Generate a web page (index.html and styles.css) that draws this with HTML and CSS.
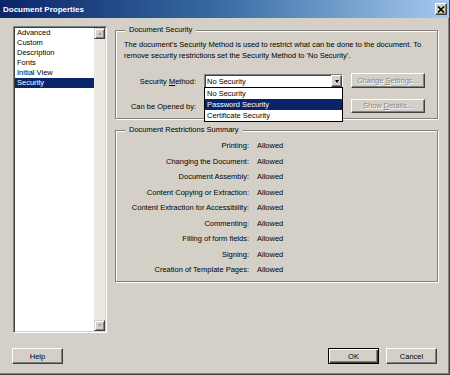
FILE: index.html
```html
<!DOCTYPE html>
<html>
<head>
<meta charset="utf-8">
<link rel="stylesheet" href="styles.css">
</head>
<body>
<div class="window">
  <div class="titlebar">
    <span class="title">Document Properties</span>
    <span class="close">
      <svg width="8" height="7" viewBox="0 0 8 7"><path d="M1 0.5 L7 6.5 M7 0.5 L1 6.5" stroke="#000" stroke-width="1.6"/></svg>
    </span>
  </div>
  <div class="body">
    <div class="listbox">
      <ul class="items">
        <li>Advanced</li>
        <li>Custom</li>
        <li>Description</li>
        <li>Fonts</li>
        <li>Initial View</li>
        <li class="selected">Security</li>
      </ul>
      <div class="scrollbar">
        <div class="sbtn"><span class="tri up"></span></div>
        <div class="track"></div>
        <div class="sbtn"><span class="tri down"></span></div>
      </div>
    </div>
    <div class="main">
      <div class="group g1">
        <span class="legend">Document Security</span>
        <p class="desc">The document's Security Method is used to restrict what can be done to the document. To remove security restrictions set the Security Method to 'No Security'.</p>
        <div class="form">
          <span class="label">Security <u>M</u>ethod:</span>
          <div class="combo">
            <span class="value">No Security</span>
            <span class="arrow"><span class="tri down dark"></span></span>
            <ul class="popup">
              <li>No Security</li>
              <li class="selected">Password Security</li>
              <li>Certificate Security</li>
            </ul>
          </div>
          <span class="btn disabled"><span>Change <u>S</u>ettings...</span></span>
          <span class="label">Can be Opened by:</span>
          <span class="blank"></span>
          <span class="btn disabled short"><span>Show <u>D</u>etails...</span></span>
        </div>
      </div>
      <div class="group g2">
        <span class="legend">Document Restrictions Summary</span>
        <div class="summary">
          <span class="k">Printing:</span><span class="v">Allowed</span>
          <span class="k">Changing the Document:</span><span class="v">Allowed</span>
          <span class="k">Document Assembly:</span><span class="v">Allowed</span>
          <span class="k">Content Copying or Extraction:</span><span class="v">Allowed</span>
          <span class="k">Content Extraction for Accessibility:</span><span class="v">Allowed</span>
          <span class="k">Commenting:</span><span class="v">Allowed</span>
          <span class="k">Filling of form fields:</span><span class="v">Allowed</span>
          <span class="k">Signing:</span><span class="v">Allowed</span>
          <span class="k">Creation of Template Pages:</span><span class="v">Allowed</span>
        </div>
      </div>
    </div>
  </div>
  <div class="footer">
    <span class="btn wide">Help</span>
    <span class="spacer"></span>
    <span class="btn wide default">OK</span>
    <span class="btn wide">Cancel</span>
  </div>
</div>
</body>
</html>
```

FILE: styles.css
```css
* { box-sizing: border-box; }
html, body { margin: 0; padding: 0; }
body {
  width: 450px;
  height: 375px;
  overflow: hidden;
  background: #d4d0c8;
  font-family: "Liberation Sans", Arial, sans-serif;
  font-size: 7.5px;
  color: #000;
}
u { text-decoration: underline; }
ul { list-style: none; margin: 0; padding: 0; }

.window {
  width: 450px;
  height: 375px;
  display: flex;
  flex-direction: column;
  background: #d4d0c8;
  border-right: 1px solid #404040;
  border-bottom: 1px solid #404040;
  box-shadow: inset -1px -1px 0 #808080;
}

.titlebar {
  height: 18px;
  flex: none;
  display: flex;
  align-items: center;
  padding: 0 2px 0 3px;
  background: linear-gradient(to right, #0a246a 0%, #3a6ea5 50%, #a6caf0 100%);
}
.title {
  flex: 1;
  color: #fff;
  font-weight: bold;
  font-size: 8px;
}
.close {
  width: 12px;
  height: 12px;
  display: flex;
  align-items: center;
  justify-content: center;
  background: #d4d0c8;
  border: 1px solid;
  border-color: #fff #404040 #404040 #fff;
  box-shadow: inset -1px -1px 0 #808080;
}

.body {
  flex: none;
  display: flex;
  gap: 8px;
  padding: 8px 11px 0 13px;
  height: 316px;
}

.listbox {
  flex: none;
  width: 94px;
  height: 307px;
  display: flex;
  background: #fff;
  border: 1px solid;
  border-color: #808080 #fff #fff #808080;
  box-shadow: inset 1px 1px 0 #404040, inset -1px -1px 0 #d4d0c8;
  padding: 1px;
}
.items {
  flex: 1;
}
.items li {
  height: 10px;
  line-height: 10px;
  padding-left: 2px;
  white-space: nowrap;
}
.items li.selected, .popup li.selected {
  background: #0a246a;
  color: #fff;
}
.scrollbar {
  width: 11px;
  display: flex;
  flex-direction: column;
  background: #ece9e2;
}
.track { flex: 1; }
.sbtn {
  height: 11px;
  display: flex;
  align-items: center;
  justify-content: center;
  background: #d4d0c8;
  border: 1px solid;
  border-color: #d4d0c8 #404040 #404040 #d4d0c8;
  box-shadow: inset 1px 1px 0 #fff, inset -1px -1px 0 #808080;
}
.tri {
  width: 0; height: 0;
  border-left: 2.5px solid transparent;
  border-right: 2.5px solid transparent;
}
.tri.up { border-bottom: 3px solid #a0a0a0; }
.tri.down { border-top: 3px solid #a0a0a0; }
.tri.down.dark { border-top-color: #000; }

.main {
  flex: 1;
  min-width: 0;
  display: flex;
  flex-direction: column;
  gap: 11px;
  padding-top: 4px;
}

.group {
  position: relative;
  border: 1px solid #808080;
  box-shadow: inset 1px 1px 0 #fff, 1px 1px 0 #fff;
  padding-left: 8px;
  padding-right: 6px;
}
.legend {
  position: absolute;
  top: -6px;
  left: 9px;
  padding: 0 4px;
  line-height: 10px;
  background: #d4d0c8;
}
.g1 {
  height: 89px;
  padding-top: 8px;
}
.desc {
  margin: 0;
  line-height: 11px;
}
.form {
  margin-top: 12px;
  display: grid;
  grid-template-columns: 72px 139px 74px;
  grid-template-rows: 15px 15px;
  column-gap: 8px;
  row-gap: 10px;
  align-items: center;
}
.form .label {
  text-align: right;
  padding-top: 2px;
  white-space: nowrap;
}
.combo {
  position: relative;
  height: 14px;
  margin-top: 1px;
  display: flex;
  align-items: center;
  background: #fff;
  border: 1px solid;
  border-color: #808080 #fff #fff #808080;
  box-shadow: inset 1px 1px 0 #404040;
  padding-left: 2px;
}
.combo .value { flex: 1; }
.arrow {
  width: 11px;
  height: 12px;
  display: flex;
  align-items: center;
  justify-content: center;
  background: #d4d0c8;
  border: 1px solid;
  border-color: #fff #404040 #404040 #fff;
  box-shadow: inset -1px -1px 0 #808080;
}
.popup {
  position: absolute;
  top: 12px;
  left: -1px;
  right: -1px;
  border: 1px solid #000;
  background: #fff;
  z-index: 2;
}
.popup li {
  height: 11px;
  line-height: 11px;
  padding-left: 2px;
}

.btn {
  display: flex;
  align-items: center;
  justify-content: center;
  height: 15px;
  background: #d4d0c8;
  border: 1px solid;
  border-color: #fff #404040 #404040 #fff;
  box-shadow: inset -1px -1px 0 #808080;
  white-space: nowrap;
}
.btn.disabled {
  color: #8a8780;
  text-shadow: 1px 1px 0 #fff;
}
.btn.short { height: 14px; }

.g2 {
  height: 152px;
  padding-top: 7px;
}
.summary {
  display: grid;
  grid-template-columns: 125px auto;
  grid-auto-rows: 15.5px;
  column-gap: 8px;
  align-items: center;
}
.summary .k { text-align: right; white-space: nowrap; }

.footer {
  flex: none;
  display: flex;
  gap: 7px;
  padding: 14px 12px 0 12px;
}
.spacer { flex: 1; }
.btn.wide {
  width: 51px;
  height: 16px;
}
.btn.default {
  border-color: #000;
  box-shadow: inset 1px 1px 0 #fff, inset -1px -1px 0 #404040, inset -2px -2px 0 #808080;
}
```
